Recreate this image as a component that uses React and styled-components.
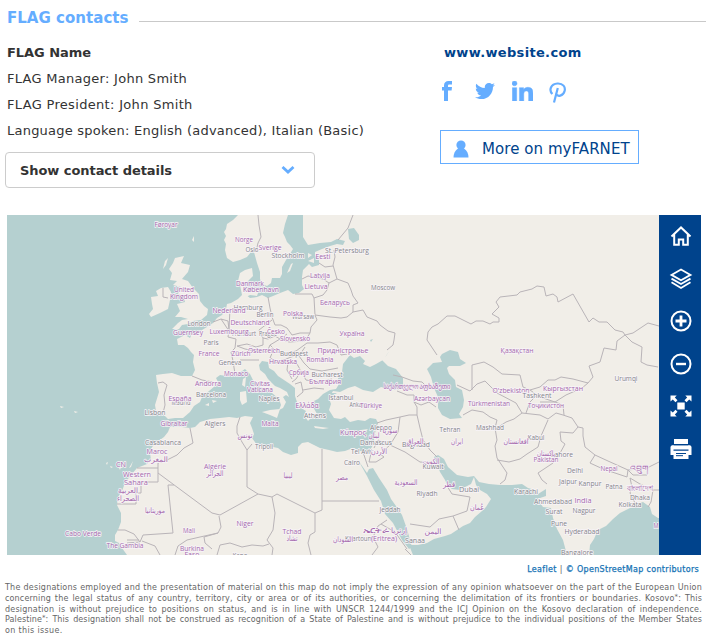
import React from "react";
import styled, { createGlobalStyle } from "styled-components";
import { FaTwitter, FaLinkedinIn } from "react-icons/fa";

const GlobalStyle = createGlobalStyle`
  * { box-sizing: border-box; }
  body { margin: 0; background: #fff; font-family: "DejaVu Sans", Verdana, sans-serif; color: #333; }
`;

const Page = styled.main`
  width: 726px;
  height: 638px;
  overflow: hidden;
  display: flex;
  flex-direction: column;
`;

const Header = styled.header`
  display: flex;
  align-items: center;
  height: 40px;
  padding: 0 20px 4px 7px;
  gap: 11px;
`;

const Title = styled.h1`
  margin: 0;
  width: 121px;
  font-size: 15px;
  line-height: 20px;
  letter-spacing: 0.03px;
  color: #65adff;
  white-space: nowrap;
`;

const Rule = styled.hr`
  flex: 1;
  height: 1px;
  margin: 7px 0 0;
  border: 0;
  background: #c9c9c9;
`;

const Contacts = styled.section`
  display: grid;
  grid-template-columns: 435px 1fr;
  height: 175px;
  padding-left: 5px;
`;

const Column = styled.div`
  display: flex;
  flex-direction: column;
  align-items: flex-start;
`;

const Line = styled.p`
  margin: 0;
  padding-left: 2px;
  font-size: 13px;
  line-height: 26px;
  font-weight: ${(p) => (p.$bold ? 700 : 400)};
  letter-spacing: ${(p) => (p.$bold ? -0.05 : p.$spacing || 0.23)}px;
  white-space: nowrap;
`;

const Site = styled.a`
  padding-left: 4px;
  font-size: 13px;
  font-weight: 700;
  line-height: 26px;
  letter-spacing: 0.33px;
  color: #00438c;
  text-decoration: none;
`;

const DetailsButton = styled.button`
  display: flex;
  align-items: center;
  justify-content: space-between;
  width: 310px;
  height: 36px;
  margin-top: 8px;
  padding: 0 18px 0 14px;
  background: #fff;
  border: 1px solid #ccc;
  border-radius: 4px;
  color: #333;
  font: 700 13px "DejaVu Sans", Verdana, sans-serif;
  letter-spacing: -0.06px;
`;

const Social = styled.nav`
  display: flex;
  align-items: center;
  height: 26px;
  margin-top: 13px;
  color: #65adff;
`;

const SocialLink = styled.a`
  display: flex;
  width: ${(p) => p.$width}px;
  margin: ${(p) => p.$top || 0}px ${(p) => p.$gap}px 0 0;
  svg { display: block; width: 100%; height: ${(p) => p.$height}px; }
`;

const FarnetButton = styled.button`
  display: flex;
  align-items: center;
  gap: 13px;
  width: 199px;
  height: 34px;
  margin-top: 25px;
  padding: 3px 0 0 12px;
  background: #fff;
  border: 1px solid #65adff;
  color: #00438c;
  font: 15px "DejaVu Sans", Verdana, sans-serif;
  letter-spacing: 0.06px;
  white-space: nowrap;
`;

const MapPanel = styled.section`
  display: flex;
  width: 694px;
  height: 340px;
  margin-left: 7px;
`;

const MapCanvas = styled.svg`
  display: block;
  width: 652px;
  height: 340px;
  background: #b5d0d0;
`;

const Toolbar = styled.div`
  display: flex;
  flex-direction: column;
  align-items: center;
  gap: 18.6px;
  width: 42px;
  padding: 9px 0 0 1px;
  background: #00438c;
`;

const Tool = styled.button`
  display: block;
  width: 24px;
  height: 24px;
  padding: 0;
  border: 0;
  background: none;
  svg { display: block; width: 24px; height: 24px; fill: none; stroke: #fff; stroke-width: 2; }
`;

const Attribution = styled.div`
  display: flex;
  gap: 3px;
  justify-content: flex-end;
  width: 699px;
  padding-top: 8px;
  height: 28px;
  font-size: 8px;
  line-height: 13px;
  letter-spacing: 0.32px;
  color: #666;
  a { color: #1673b5; text-decoration: none; -webkit-text-stroke: 0.25px #1673b5; }
`;

const Notice = styled.div`
  width: 702px;
  padding-left: 5px;
  font-size: 8px;
  line-height: 10.8px;
  color: #666;
`;

const NoticeLine = styled.p`
  margin: 0;
  width: 697px;
  height: 10.8px;
  text-align: justify;
  text-align-last: ${(p) => (p.$last ? "left" : "justify")};
  letter-spacing: ${(p) => p.$spacing || 0}px;
  white-space: nowrap;
  sup { font-size: 7px; line-height: 0; vertical-align: 2px; }
`;

const Land = styled.path`
  fill: #f1eee8;
`;

const Water = styled.path`
  fill: #b5d0d0;
`;

const Border = styled.path`
  fill: none;
  stroke: #b9b4b8;
  stroke-width: 1;
  stroke-linejoin: round;
`;

const Place = styled.text`
  font-family: "Open Sans", "Noto Sans", "DejaVu Sans", sans-serif;
  font-size: 7.6px;
  text-anchor: middle;
  fill: ${(p) => (p.$city ? "#85858b" : "#a569ad")};
  stroke: #f8f4f8;
  stroke-opacity: 0.85;
  stroke-width: 1.8;
  stroke-linejoin: round;
  paint-order: stroke;
`;

const CONTINENT =
  "M238 215L233 220 227 224 226 229 224 232 226 236 224 240 226 244 225 250 227 258 233 262 240 260 247 257 251 252 254 252 257 263 260 272 260 279 262 284 267 286 271 283 272 278 280 278 282 274 282 267 286 260 290 254 293 249 290 245 287 242 285 237 283 233 285 224 288 215H303L303 225 303 237 308 245 320 243 331 242 337 239 345 241 343 245 337 244 330 246 322 249 315 252 315 256 319 259 319 265 312 267 309 264 303 270 302 277 302 285 304 289 299 293 293 294 288 290 280 293 273 296 268 298 262 295 257 297 250 298 245 294 243 290 246 284 249 280 253 276 252 268 245 270 240 273 238 281 240 285 242 295 238 299 231 303 227 304 226 309 222 315 217 318 213 323 207 327 202 330 197 333 192 334 190 338 185 335 177 339 178 345 184 345 188 348 191 352 194 355 193 362 195 370 192 376 181 376 172 373 163 374 156 375 157 383 159 392 155 405 156 411 161 412 168 419 175 418 183 418 190 412 194 406 200 402 202 397 209 391 215 386 218 382 216 378 220 375 226 376 231 376 238 374 245 369 250 374 253 380 257 385 265 389 272 393 279 399 281 405 279 410 283 408 286 402 283 397 286 395 289 397 287 392 280 388 275 386 268 379 265 374 260 370 259 365 262 361 268 362 269 368 274 371 278 376 284 380 290 384 295 388 295 396 297 402 301 408 306 411 304 415 308 421 312 417 315 419 317 414 312 405 314 401 318 399 323 394 330 390 336 389 339 384 338 378 342 372 343 364 350 355 354 358 360 356 365 361 363 364 370 367 376 364 383 360 390 350 386 356 382 360 388 366 396 369 403 378 403 385 398 390 389 389 381 387 373 392 363 390 355 386 348 388 340 392 333 391 329 398 331 404 329 410 334 418 341 419 345 417 350 422 358 420 365 421 370 418 376 419 378 423 375 433 374 440 372 447 368 452 360 451 353 448 345 451 337 452 329 450 320 448 314 445 308 442 302 443 298 447 298 453 291 455 283 452 278 448 273 447 264 446 257 445 252 438 254 434 252 428 250 423 253 417 245 416 237 418 229 417 220 418 210 419 200 422 195 427 190 428 182 427 170 427 168 432 164 437 157 442 152 447 150 453 151 460 147 464 137 468 131 475 125 483 122 491 118 497 117 505 121 513 121 522 118 530 115 535 115 541 119 543 122 548 127 555H413L409 545 418 545 427 543 434 539 445 536 451 534 457 530 463 526 470 523 475 517 482 511 486 507 491 499 487 494 480 490 476 485 474 477 471 484 465 487 460 490 452 489 448 486 445 480 440 472 437 464 434 457 438 455 444 459 448 467 457 475 468 477 474 476 479 482 489 484 500 485 512 485 522 484 528 488 535 490 538 494 546 489 546 496 537 499 543 507 551 508 553 518 557 529 563 540 567 555H589L590 545 594 539 598 530 606 526 613 519 620 513 630 508 637 504 643 502 650 507 652 514 658 518H660V215Z";

const ISLANDS = [
  "M175 258L184 256 181 263 190 265 188 272 182 279 188 281 193 288 199 294 200 301 204 306 208 309 207 315 201 320 193 321 188 324 182 325 179 329 172 329 178 323 182 320 188 319 181 317 175 317 180 311 177 304 185 302 184 297 178 294 181 287 173 285 177 281 170 280 172 273 169 269 173 263Z",
  "M151 297L158 296 156 291 161 288 168 287 171 292 170 300 168 309 160 313 151 317 149 314 153 309 152 304Z",
  "M165 261L168 258 166 265 163 269ZM192 240L194 236 194 242Z",
  "M243 291L248 288 252 291 256 287 259 290 257 296 250 295 246 297ZM287 273L291 264 293 263 290 271ZM308 253L312 255 308 258ZM308 261L314 258 314 263Z",
  "M262 412L270 410 280 409 277 418 270 415ZM240 392L246 391 247 402 242 405 240 400ZM243 379L246 377 245 387 242 385Z",
  "M314 426L321 427 329 428 323 429 315 428ZM355 433L361 430 368 429 362 435 356 436Z",
  "M205 405L209 403 209 406ZM212 400L217 401 213 403ZM60 406L64 407 61 408ZM74 411L78 412 75 413ZM129 468L133 461 131 467ZM106 463L108 462 107 465ZM110 466L113 467 111 468ZM119 468L121 467 120 470Z",
];

const WATERS = [
  "M348 229L354 228 359 235 359 240 353 243 349 239Z",
  "M442 354L450 350 458 352 460 359 466 363 460 366 449 366 447 368 449 374 455 380 456 387 462 390 464 400 463 407 459 414 462 418 450 419 442 415 438 408 438 397 434 388 431 377 427 369 433 363 442 362 440 357Z",
  "M358 460L367 473 369 469 373 468 379 478 387 490 391 499 396 506 402 515 407 529 410 540 412 547 409 549 402 540 393 523 385 514 381 501 374 490 367 476Z",
  "M326 397L329 393 337 393 332 396ZM370 340L373 339 371 342Z",
];

const BORDERS = [
  "M258 215L259 225 261 237 258 243 256 252M353 215L348 228 338 240M334 250L335 257 333 265 337 279M319 263L325 267 333 266M302 279L308 276 323 279 329 283 337 279M329 283L327 290 323 295 314 298 312 294 295 294",
  "M337 279L348 283 351 290 353 296 358 303 353 305 353 312 363 310 367 317 377 321 380 325 388 331 395 333 394 340 393 345 387 350M314 298L315 315 317 320 311 327 310 333M315 315L330 317 341 318 347 317 353 312",
  "M268 297L270 308 272 317 275 325 281 325 287 328 292 335 300 333 310 333M272 320L259 330 263 338 268 339 275 336 280 339 287 334M237 346L247 344 256 347 263 345 263 338",
  "M213 322L221 319 228 321 229 330 228 337 236 339 235 348 231 352 233 361 235 374M229 330L230 308M221 319L229 331M237 346L245 349 255 351 267 352 270 345 280 339 289 342 305 341 310 333M270 345L277 352 285 354 296 351 307 343 318 343 330 342 337 345 341 355 347 354",
  "M305 347L299 356 304 363 310 369 322 371 338 368M273 351L270 358 278 361 286 359 294 356M270 362L280 363 288 362 287 370 292 379M288 362L297 364 301 371 296 379 292 382M301 371L306 380 318 382 332 379M295 384L301 382 303 392 297 397M303 390L314 388 324 389",
  "M158 383L163 382 167 385 164 395 165 405 163 413M192 376L202 380 213 382M240 360L250 360 259 360M163 288L163 297 168 298",
  "M437 355L427 340 428 332 432 327 438 324 447 316 455 316 471 324 476 321 483 321 490 324 493 322 499 322 499 318 492 314 499 307 496 302 500 297 517 295 520 292 532 289 537 286 544 287 546 296 553 294 557 297 558 302 573 294 589 322 593 318 599 322 607 322 615 330 623 332 625 335 633 333 648 323 659 326M625 335L632 342 642 347 641 362 647 365 658 367M625 335L617 341 616 350 604 348 600 362 589 366 593 377 588 383 573 379 561 377 555 380 548 380 540 387 530 390 523 387 520 375 502 374 493 367 484 362 472 365V390",
  "M457 385L470 391 477 384 485 381 494 390 497 393 516 403 522 413M588 383L582 388 566 395 555 402 563 405 564 415M530 390L537 395 530 402 526 413M540 397L555 402 540 402",
  "M463 415L472 410 483 412 490 417 497 420 495 428 497 440 495 446 497 458 507 473 505 480 500 484M497 428L506 422 514 419 522 413 540 415 548 419 556 413 563 415 572 418 578 427 583 428 583 436 585 447 595 455 608 461 628 470 647 468 659 462M497 460L509 462 520 459 527 454 538 447 541 436 548 420M578 427L573 433 560 432 561 441 565 444 559 455 553 463 538 473 542 480 547 484M595 455L590 463 603 469 627 477 628 470 633 475 647 475 647 468M630 478L632 487 630 493 635 503M630 478L640 484 653 490 651 502 648 507M653 490L659 490",
  "M393 375L402 377 413 381 422 382 428 388 434 389M397 391L407 395 414 395 414 402 421 405 429 402 436 407M414 402L417 407 417 415 420 428 423 440 430 450 438 458M377 423L386 420 400 417 409 415 417 415M400 417L398 432 390 445 378 440 374 448M390 445L405 452 420 462 435 463M390 445L380 454 384 457 376 462 369 462 372 449M363 452L368 467",
  "M240 417L237 426 237 433 242 442 247 450 252 444M247 450L247 487 258 494 220 515 212 513 158 473 158 463 167 460 177 455 184 448 193 443 190 428M158 473V482H141V493H136V504H117M137 468H158",
  "M174 485H168L173 533 143 535 140 542 134 534 125 530 118 530M258 494L272 497 277 494 315 513 322 510V449M322 501H379M272 497L275 513 273 530 267 540 273 548 272 555M315 513L315 532 310 535 308 543 311 555M219 516L221 527 218 533 200 537 187 540 178 546 175 555M218 533L204 537 205 543 212 549M217 555L220 545 230 543 242 547 252 545 263 546 269 544M140 542L127 543M142 541L155 546 160 555M127 540L139 540",
  "M387 520L378 526 373 537 378 547 372 555M381 524L395 532 407 549M410 524L430 527 439 519 453 516 467 511 470 497 452 494 447 486M453 516L459 530M405 549L411 555",
];

/* text, centre x, baseline y, width, city flag */
const PLACES = [
  ["Føroyar", 166, 227, 23], ["Norge", 244, 242, 18], ["Oslo", 252, 252, 13, 1], ["Sverige", 270, 250, 23], ["Stockholm", 288, 258, 33, 1],
  ["Eesti", 323, 259, 15], ["St. Petersburg", 347, 253, 44, 1], ["Latvija", 320, 278, 20], ["Lietuva", 316, 289, 23], ["Moscow", 383, 290, 24, 1],
  ["Danmark", 250, 286, 28], ["København", 261, 292, 36], ["Беларусь", 335, 305, 30], ["United", 184, 292, 20], ["Kingdom", 184, 299, 28],
  ["Hamburg", 248, 310, 29, 1], ["Nederland", 229, 313, 33], ["Berlin", 265, 317, 17, 1], ["Warsaw", 303, 319, 22, 1], ["Polska", 293, 316, 20],
  ["London", 199, 326, 23, 1], ["Deutschland", 250, 325, 39], ["Guernsey", 188, 335, 30], ["Frankfurt", 244, 336, 24, 1], ["Luxembourg", 229, 334, 39],
  ["Prague", 268, 336, 18, 1], ["Česko", 276, 334, 18], ["Slovensko", 295, 341, 30], ["Україна", 352, 336, 25], ["Paris", 211, 345, 15, 1],
  ["France", 209, 356, 21], ["Österreich", 264, 353, 32], ["Zürich", 241, 356, 19], ["Budapest", 294, 356, 28, 1], ["Придністровье", 343, 353, 51],
  ["Geneva", 230, 365, 23, 1], ["Hrvatska", 283, 364, 28], ["România", 320, 362, 27], ["Monaco", 236, 376, 24], ["Србија", 299, 375, 20],
  ["Bucharest", 327, 377, 31, 1], ["България", 325, 384, 32], ["Andorra", 208, 386, 26], ["Civitas", 260, 386, 20], ["Vaticana", 260, 392, 26],
  ["საქართველო", 401, 389, 35], ["აფხაზეთი", 435, 389, 31], ["Қазақстан", 517, 353, 33], ["Urumqi", 626, 381, 23, 1], ["Lisbon", 155, 415, 21, 1],
  ["Madrid", 181, 405, 19, 1], ["España", 180, 401, 23], ["Barcelona", 211, 397, 30, 1], ["Gibraltar", 174, 426, 27], ["Algiers", 215, 426, 21, 1],
  ["Naples", 269, 401, 21, 1], ["Ελλάδα", 307, 408, 23], ["Istanbul", 341, 400, 25, 1], ["Ankara", 358, 407, 17, 1], ["Türkiye", 371, 408, 22],
  ["Azərbaycan", 432, 401, 36], ["Athens", 315, 418, 22, 1], ["Malta", 270, 426, 17], ["Κύπρος", 353, 435, 26], ["Aleppo", 381, 430, 22, 1],
  ["سوريا", 390, 433, 15], ["لبنان", 374, 438, 11], ["Damascus", 376, 445, 32, 1], ["Baghdad", 416, 447, 28, 1], ["العراق", 415, 444, 17],
  ["Tehran", 450, 432, 21, 1], ["Casablanca", 163, 445, 36, 1], ["Maroc", 157, 454, 21], ["المغرب", 156, 462, 24], ["تونس", 245, 438, 15],
  ["Tripoli", 264, 449, 18, 1], ["Tel Aviv", 362, 454, 22, 1], ["الأردن", 379, 454, 16], ["Cairo", 352, 465, 16, 1], ["الكويت", 431, 464, 17],
  ["Kuwait", 433, 469, 21, 1], ["ایران", 457, 444, 12], ["Western", 137, 477, 28], ["Sahara", 136, 485, 24], ["العربية", 128, 493, 20],
  ["الصحراء", 128, 501, 22], ["CN", 121, 467, 10], ["Algérie", 215, 469, 22], ["الجزائر", 215, 476, 17], ["ليبيا", 288, 478, 9],
  ["مصر", 342, 480, 12], ["السعودية", 406, 485, 23], ["Riyadh", 427, 496, 21, 1], ["قطر", 449, 487, 12], ["Dubai", 469, 492, 20, 1],
  ["موريتانيا", 155, 513, 20], ["Mali", 189, 533, 12], ["Niger", 245, 526, 17], ["Tchad", 292, 534, 19], ["تشاد", 292, 541, 11],
  ["Jeddah", 390, 512, 21, 1], ["Cabo Verde", 83, 536, 36], ["The Gambia", 125, 548, 37], ["Burkina", 192, 551, 24], ["Faso", 192, 557, 15],
  ["Kano", 240, 558, 15, 1], ["Khartoum", 359, 541, 28, 1], ["السودان", 343, 542, 20], ["(Eritrea)", 384, 541, 26], ["ኤርትራ", 376, 533, 26], ["إرتريا", 399, 533, 16],
  ["Sanaa", 415, 543, 20, 1], ["اليمن", 433, 534, 17], ["عُمان", 477, 510, 14], ["O'zbekiston", 511, 393, 37], ["Кыргызстан", 563, 391, 40],
  ["Tashkent", 537, 398, 29, 1], ["Türkmenistan", 489, 406, 42], ["Тоҷикистон", 546, 408, 36], ["Mashhad", 490, 430, 28, 1], ["Kabul", 536, 440, 17, 1],
  ["افغانستان", 516, 444, 25], ["Lahore", 562, 457, 22, 1], ["پاکستان", 546, 456, 18], ["Pakistan", 546, 462, 25], ["Delhi", 575, 473, 16, 1],
  ["Nepal", 609, 471, 17], ["Jaipur", 568, 484, 18, 1], ["Kanpur", 590, 486, 23, 1], ["Patna", 614, 489, 17, 1], ["འབྲུག", 639, 471, 18],
  ["বাংলাদেশ", 640, 491, 26], ["Karachi", 526, 494, 24, 1], ["Ahmedabad", 553, 504, 38, 1], ["India", 583, 503, 17], ["Dhaka", 640, 500, 20, 1],
  ["Kolkata", 630, 507, 23, 1], ["Surat", 554, 514, 17, 1], ["Nagpur", 584, 513, 23, 1], ["Pune", 559, 526, 16, 1], ["Hyderabad", 582, 534, 35, 1],
  ["Bangalore", 577, 555, 32, 1], ["M", 656, 528, 5],
];

const tools = [
  ["Home", <path key="a" d="M2.5 12.500L12 3.500l9.500 9M5.200 10.500v10.300h4.600v-5.300h4.400v5.300h4.600v-10.300" />],
  ["Layers", <path key="a" strokeWidth="1.800" d="M12 2.500l9.500 5.400-9.500 5.400-9.500-5.400zM2.500 11.600l9.500 5.400 9.500-5.400M2.500 15.300l9.500 5.700 9.500-5.700" />],
  ["Zoom in", <g key="a"><circle cx="12" cy="12" r="9.5" /><path strokeWidth="2.8" d="M12 6.500v11M6.500 12h11" /></g>],
  ["Zoom out", <g key="a"><circle cx="12" cy="12" r="9.5" /><path strokeWidth="2.4" d="M7 12h10" /></g>],
  ["Full extent", <g key="a" fill="#fff" stroke="none"><path d="M8.3 8.500h7.400v7H8.300zM1.500 1.500h6.200L5.800 3.600l2.700 2.700-2 2-2.700-2.700-2.300 2zM22.500 1.500h-6.200l1.900 2.100-2.700 2.700 2 2 2.700-2.700 2.300 2zM1.500 22.500h6.200l-1.900-2.100 2.700-2.700-2-2-2.700 2.700-2.300-2zM22.500 22.500h-6.200l1.900-2.100-2.700-2.700 2-2 2.700 2.700 2.300-2z" /></g>],
  ["Print", <g key="a"><path fill="#fff" stroke="none" d="M5 2h14v5H5zM2.800 8.200h18.400l1.300 1.500V18h-3v4h-15v-4h-3V9.700z" /><path stroke="#00438c" strokeWidth="1.300" d="M5 7.600h14M4.500 13.200h15" /><path stroke="#00438c" strokeWidth="1" d="M7 16.500h10M7 18.700h7" /></g>],
];

function EuropeMap() {
  return (
    <MapCanvas viewBox="7 215 652 340" role="img" aria-label="Map">
      <Land d={CONTINENT} />
      {ISLANDS.map((d) => <Land key={d} d={d} />)}
      {WATERS.map((d) => <Water key={d} d={d} />)}
      {BORDERS.map((d) => <Border key={d} d={d} />)}
      {PLACES.map(([name, x, y, width, city]) => (
        <Place key={name} x={x} y={y} $city={city} textLength={width} lengthAdjust="spacingAndGlyphs">{name}</Place>
      ))}
    </MapCanvas>
  );
}

export default function App() {
  return (
    <Page>
      <GlobalStyle />
      <Header>
        <Title>FLAG contacts</Title>
        <Rule />
      </Header>
      <Contacts>
        <Column>
          <Line $bold>FLAG Name</Line>
          <Line $spacing={0.28}>FLAG Manager: John Smith</Line>
          <Line $spacing={0.32}>FLAG President: John Smith</Line>
          <Line>Language spoken: English (advanced), Italian (Basic)</Line>
          <DetailsButton>
            Show contact details
            <svg width="16" height="10" viewBox="0 0 16 10" fill="none" stroke="#65adff" strokeWidth="2.8"><path d="M2.500 2l5.500 5 5.500-5" /></svg>
          </DetailsButton>
        </Column>
        <Column>
          <Site>www.website.com</Site>
          <Social>
            <SocialLink $width={14} $height={20} $gap={21} $top={-2} aria-label="Facebook">
              <svg viewBox="0 0 14 20" fill="currentColor"><path d="M4 20V9.500H2V6H4V4.500C4 1.500 5.800 0 8.500 0H12V3.500H9.500C8.400 3.500 8 4 8 4.900V6H12L11.600 9.500H8V20Z" /></svg>
            </SocialLink>
            <SocialLink $width={20} $height={20} $gap={17} $top={-2} aria-label="Twitter"><FaTwitter /></SocialLink>
            <SocialLink $width={21} $height={20} $gap={16} $top={-2} aria-label="LinkedIn"><FaLinkedinIn viewBox="0 0 448 448" preserveAspectRatio="none" stroke="currentColor" strokeWidth="10" /></SocialLink>
            <SocialLink $width={18} $height={21} $gap={0} aria-label="Pinterest">
              <svg viewBox="0 0 18 21" fill="none" stroke="currentColor" strokeWidth="2.2"><path d="M3.400 12C-.4 8.200 1.700 2 8.500 1.500C14 1.200 16.700 5 15.600 9C14.300 14 8.200 15.500 7 11.300M8.800 6L5 20.500" /></svg>
            </SocialLink>
          </Social>
          <FarnetButton>
            <svg width="16" height="18" viewBox="0 0 16 18" fill="#65adff"><circle cx="8" cy="5" r="4.6" /><path d="M5 8.500h6c3 2 4.500 5 4.500 9H.5c0-4 1.500-7 4.500-9z" /></svg>
            More on myFARNET
          </FarnetButton>
        </Column>
      </Contacts>
      <MapPanel>
        <EuropeMap />
        <Toolbar>
          {tools.map(([label, icon]) => (
            <Tool key={label} aria-label={label}><svg viewBox="0 0 24 24">{icon}</svg></Tool>
          ))}
        </Toolbar>
      </MapPanel>
      <Attribution><a>Leaflet</a><span>|</span><a>© OpenStreetMap contributors</a></Attribution>
      <Notice>
        <NoticeLine $spacing={0.22}>The designations employed and the presentation of material on this map do not imply the expression of any opinion whatsoever on the part of the European Union</NoticeLine>
        <NoticeLine $spacing={0.16}>concerning the legal status of any country, territory, city or area or of its authorities, or concerning the delimitation of its frontiers or boundaries. Kosovo<sup>*</sup>: This</NoticeLine>
        <NoticeLine $spacing={0.22}>designation is without prejudice to positions on status, and is in line with UNSCR 1244/1999 and the ICJ Opinion on the Kosovo declaration of independence.</NoticeLine>
        <NoticeLine $spacing={0.1}>Palestine<sup>*</sup>: This designation shall not be construed as recognition of a State of Palestine and is without prejudice to the individual positions of the Member States</NoticeLine>
        <NoticeLine $last $spacing={0.35}>on this issue.</NoticeLine>
      </Notice>
    </Page>
  );
}
